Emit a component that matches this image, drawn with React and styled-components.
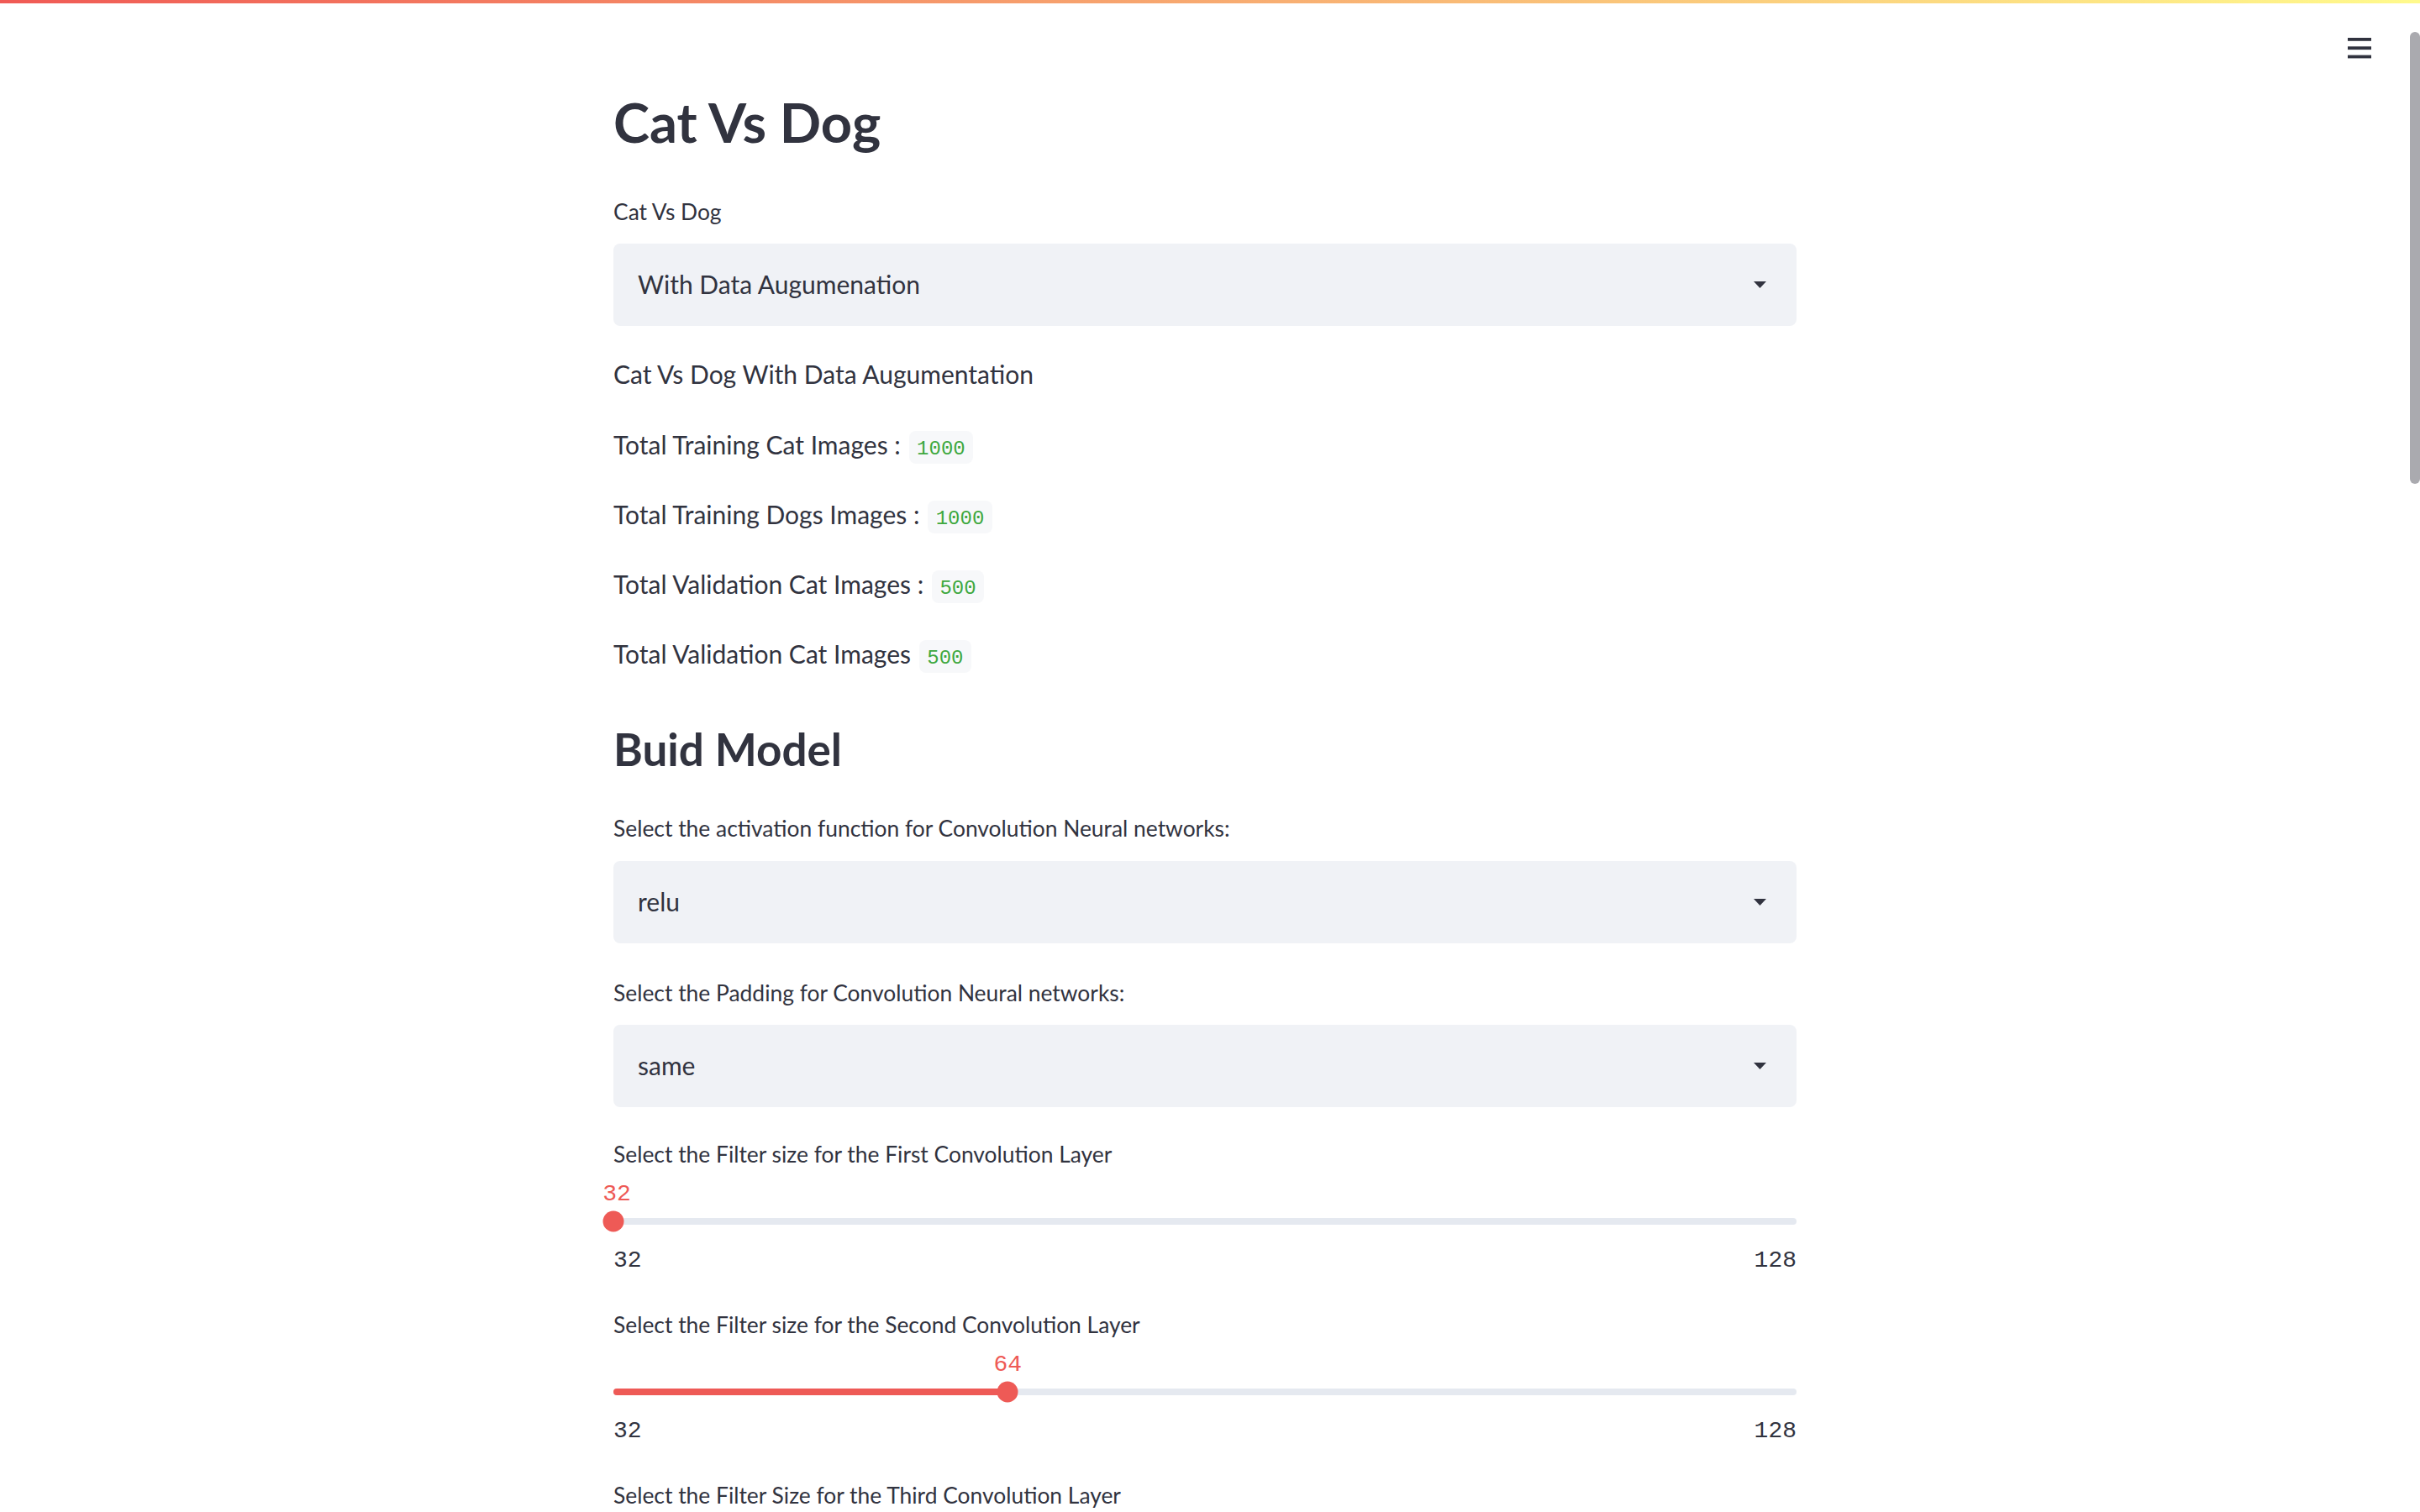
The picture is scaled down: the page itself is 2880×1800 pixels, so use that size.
import React from 'react'
import styled, { createGlobalStyle } from 'styled-components'

const GlobalStyle = createGlobalStyle`
  html, body {
    margin: 0;
    height: 100%;
    overflow: hidden;
    background: #ffffff;
  }
  body {
    font-family: Lato, "Noto Sans", sans-serif;
    color: #31333f;
  }
`

const RED = '#ee5a56'
const TEXT = '#31333f'
const MONO = '"Liberation Mono", "DejaVu Sans Mono", monospace'

const Page = styled.div`
  display: flex;
  flex-direction: column;
  height: 100vh;
`

const Decoration = styled.div`
  height: 4px;
  flex-shrink: 0;
  background: linear-gradient(90deg, rgb(240, 90, 85), rgb(255, 250, 140));
`

const Body = styled.div`
  flex: 1;
  display: flex;
  min-height: 0;
`

const Main = styled.main`
  flex: 1;
  display: flex;
  flex-direction: column;
  min-width: 0;
  overflow: hidden;
`

const ScrollRail = styled.div`
  width: 12px;
  flex-shrink: 0;
`

const ScrollThumb = styled.div`
  margin-top: 34px;
  height: 538px;
  border-radius: 6px;
  background: #aaaaaf;
`

const Header = styled.header`
  flex-shrink: 0;
  display: flex;
  justify-content: flex-end;
  align-items: flex-start;
  height: 80px;
  box-sizing: border-box;
  padding: 41px 46px 0 0;
`

const MenuButton = styled.button`
  border: 0;
  padding: 0;
  background: none;
  display: flex;
  cursor: pointer;
`

const Content = styled.div`
  flex-shrink: 0;
  width: 1408px;
  margin: 0 auto;
  padding-top: 21px;
  display: flex;
  flex-direction: column;
  gap: 32px;
`

const Title = styled.h1`
  margin: 0;
  padding-bottom: 8px;
  font-size: 65px;
  line-height: 80px;
  font-weight: 700;
  color: ${TEXT};
`

const SubTitle = styled.h2`
  margin: 0;
  padding-top: 19px;
  font-size: 53px;
  line-height: 72px;
  font-weight: 700;
  color: ${TEXT};
`

const Text = styled.p`
  margin: 0;
  font-size: 30px;
  line-height: 51.2px;
  color: ${TEXT};
`

const Code = styled.code`
  display: inline-block;
  box-sizing: border-box;
  height: 39px;
  padding: 10px 9.6px 5px;
  margin-left: 2px;
  font-family: ${MONO};
  font-size: 24px;
  line-height: 24px;
  color: #3ea83f;
  background: #f7f8fa;
  border-radius: 8px;
  vertical-align: baseline;
`

const Field = styled.div`
  padding-top: ${p => p.$top}px;
  display: flex;
  flex-direction: column;
`

const Label = styled.label`
  display: block;
  font-size: 26.4px;
  line-height: 36px;
  color: ${TEXT};
  margin-bottom: ${p => p.$gap}px;
`

const SelectBox = styled.div`
  height: 98px;
  box-sizing: border-box;
  display: flex;
  align-items: center;
  justify-content: space-between;
  padding: 0 36px 2px 29px;
  background: #f0f2f6;
  border-radius: 8px;
  font-size: 30px;
  color: ${TEXT};
  cursor: pointer;
`

const Arrow = styled.svg`
  display: block;
  margin-top: 2px;
`

const SliderArea = styled.div`
  position: relative;
  height: 48px;
  display: flex;
  align-items: center;
`

const Track = styled.div`
  position: relative;
  width: 100%;
  height: 8px;
  border-radius: 4px;
  background: #e5e9f0;
`

const Fill = styled.div`
  height: 100%;
  border-radius: 4px;
  background: ${RED};
`

const Thumb = styled.div`
  position: absolute;
  top: 50%;
  width: 25px;
  height: 25px;
  border-radius: 50%;
  background: ${RED};
  transform: translate(-50%, -50%);
`

const ThumbValue = styled.div`
  position: absolute;
  bottom: calc(100% - 6px);
  transform: translateX(-50%);
  font-family: ${MONO};
  font-size: 28px;
  line-height: 28px;
  color: ${RED};
  white-space: nowrap;
`

const TickBar = styled.div`
  display: flex;
  justify-content: space-between;
  margin-top: 8.5px;
  margin-bottom: 5.7px;
  font-family: ${MONO};
  font-size: 28px;
  line-height: 28px;
  color: ${TEXT};
`

function Hamburger() {
  return (
    <MenuButton aria-label="menu">
      <svg width="28" height="25" viewBox="0 0 28 25">
        <rect x="0" y="0" width="28" height="3.8" fill={TEXT} />
        <rect x="0" y="10.3" width="28" height="3.8" fill={TEXT} />
        <rect x="0" y="20.6" width="28" height="3.8" fill={TEXT} />
      </svg>
    </MenuButton>
  )
}

function Select({ label, value, top = 8.7 }) {
  return (
    <Field $top={top}>
      <Label $gap={20.8}>{label}</Label>
      <SelectBox>
        <span>{value}</span>
        <Arrow width="15" height="8" viewBox="0 0 15 8">
          <polygon points="0,0 15,0 7.5,8" fill={TEXT} />
        </Arrow>
      </SelectBox>
    </Field>
  )
}

// below the fold the third slider only shows its label, so its texts are left out
function Slider({ label, min, max, value, top, labelOnly }) {
  const pct = ((value - min) / (max - min)) * 100
  if (labelOnly) {
    return (
      <Field $top={top}>
        <Label $gap={0}>{label}</Label>
      </Field>
    )
  }
  return (
    <Field $top={top}>
      <Label $gap={37.8}>{label}</Label>
      <SliderArea>
        <ThumbValue style={{ left: `calc(${pct}% + ${pct === 0 ? 4 : 0}px)` }}>{value}</ThumbValue>
        <Track>
          <Fill style={{ width: `${pct}%` }} />
          <Thumb style={{ left: `${pct}%` }} />
        </Track>
      </SliderArea>
      <TickBar>
        <span>{min}</span>
        <span>{max}</span>
      </TickBar>
    </Field>
  )
}

const stats = [
  ['Total Training Cat Images :', '1000'],
  ['Total Training Dogs Images :', '1000'],
  ['Total Validation Cat Images :', '500'],
  ['Total Validation Cat Images', '500'],
]

export default function App() {
  return (
    <Page>
      <GlobalStyle />
      <Decoration />
      <Body>
        <Main>
          <Header>
            <Hamburger />
          </Header>
          <Content>
            <Title>Cat Vs Dog</Title>
            <Select label="Cat Vs Dog" value="With Data Augumenation" />
            <Text>Cat Vs Dog With Data Augumentation</Text>
            {stats.map(([k, v], i) => (
              <Text key={i}>
                {k} <Code>{v}</Code>
              </Text>
            ))}
            <SubTitle>Buid Model</SubTitle>
            <Select label="Select the activation function for Convolution Neural networks:" value="relu" />
            <Select label="Select the Padding for Convolution Neural networks:" value="same" />
            <Slider top={6} label="Select the Filter size for the First Convolution Layer" min={32} max={128} value={32} />
            <Slider top={7} label="Select the Filter size for the Second Convolution Layer" min={32} max={128} value={64} />
            <Slider top={7} labelOnly label="Select the Filter Size for the Third Convolution Layer" min={32} max={128} value={64} />
          </Content>
        </Main>
        <ScrollRail>
          <ScrollThumb />
        </ScrollRail>
      </Body>
    </Page>
  )
}
